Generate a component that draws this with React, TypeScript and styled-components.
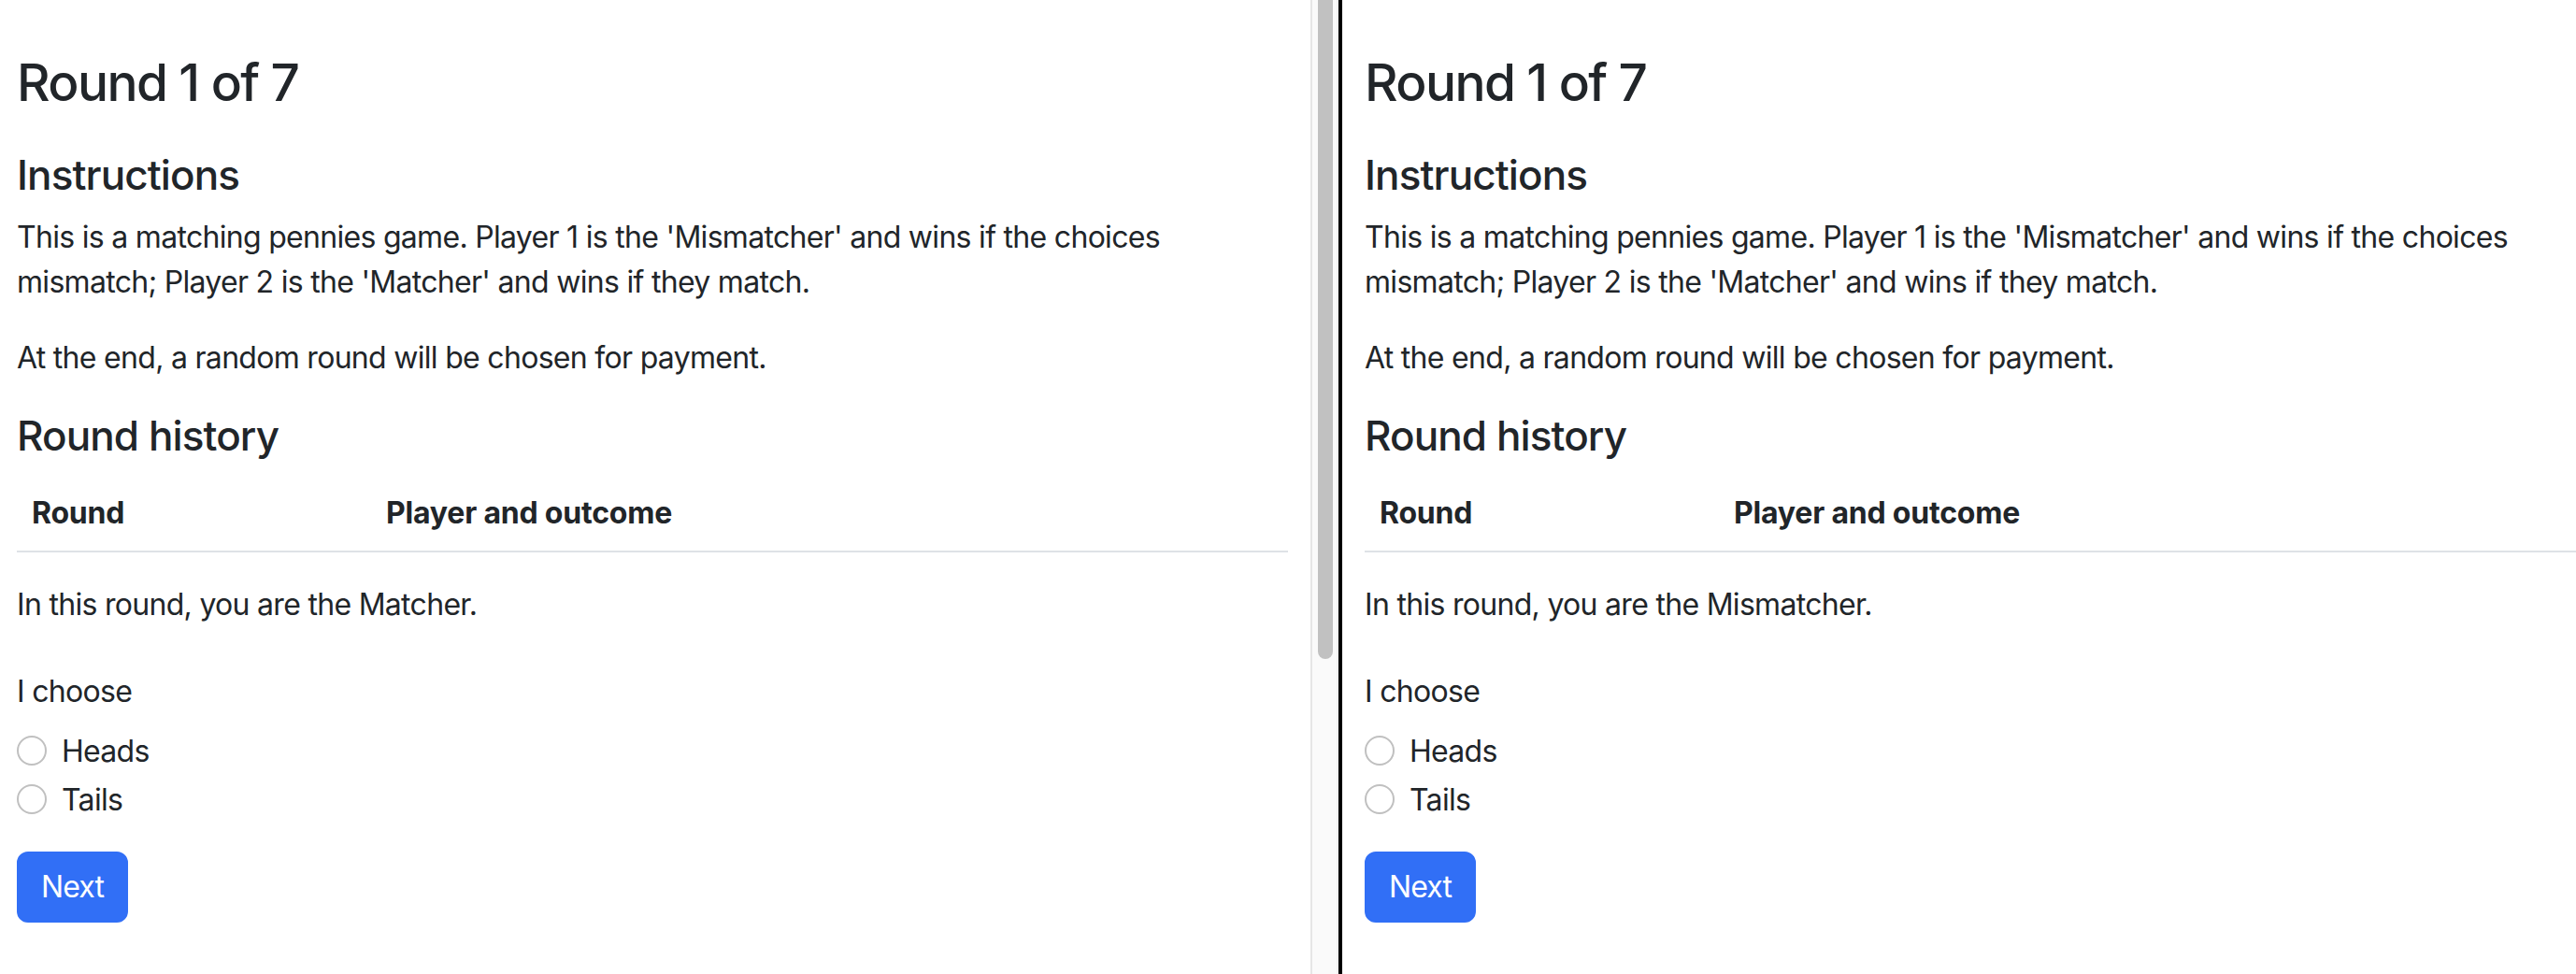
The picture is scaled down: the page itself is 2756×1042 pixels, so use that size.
import React from "react";
import styled, { createGlobalStyle } from "styled-components";

const GlobalStyle = createGlobalStyle`
  html, body {
    margin: 0;
    padding: 0;
    background: #ffffff;
  }
  body {
    font-family: Inter, "Noto Sans", "Liberation Sans", sans-serif;
    color: #212529;
    font-size: 32px;
    line-height: 48px;
  }
  * { box-sizing: border-box; }
`;

const Layout = styled.div`
  display: flex;
  width: 2756px;
  height: 1042px;
  overflow: hidden;
  background: #ffffff;
`;

const Pane = styled.section<{ $side: "left" | "right" }>`
  flex: ${(p) => (p.$side === "left" ? "0 0 1402px" : "1 1 auto")};
  min-width: 0;
  height: 100%;
  overflow: hidden;
  padding: ${(p) => (p.$side === "left" ? "55px 24px 0 18px" : "55px 0 0 24px")};
`;

const Content = styled.div`
  width: 1360px;
`;

const ScrollTrack = styled.div`
  flex: 0 0 30px;
  height: 100%;
  background: #fafafa;
  border-left: 2px solid #e6e6e6;
  border-right: 2px solid #efefef;
  padding-left: 6px;
`;

const ScrollThumb = styled.div`
  width: 16px;
  height: 705px;
  background: #c1c1c1;
  border-radius: 0 0 8px 8px;
`;

const Divider = styled.div`
  flex: 0 0 4px;
  height: 100%;
  background: #000000;
`;

const Title = styled.h2`
  margin: 0 0 40px;
  font-size: 55px;
  line-height: 66px;
  font-weight: 500;
  letter-spacing: -1.6px;
`;

const SectionTitle = styled.h4`
  margin: 0 0 16px;
  font-size: 44px;
  line-height: 53px;
  font-weight: 500;
  letter-spacing: -0.9px;
`;

const Paragraph = styled.p`
  margin: 0 0 33px;
  font-size: 32px;
  line-height: 48px;
  letter-spacing: -0.7px;
`;

const HistoryTable = styled.table`
  width: 100%;
  border-collapse: collapse;
  margin-bottom: 32px;
`;

const HeadCell = styled.th<{ $width?: number }>`
  text-align: left;
  font-weight: 700;
  font-size: 32px;
  line-height: 48px;
  letter-spacing: -0.2px;
  padding: 16px;
  border-bottom: 2px solid #dee2e6;
  width: ${(p) => (p.$width ? `${p.$width}px` : "auto")};
`;

const Fieldset = styled.div`
  margin: 45px 0 32px;
`;

const FieldLabel = styled.div`
  margin-bottom: 16px;
  font-size: 32px;
  line-height: 48px;
  letter-spacing: -0.7px;
`;

const RadioRow = styled.label`
  display: flex;
  align-items: flex-start;
  gap: 16px;
  min-height: 48px;
  margin-bottom: 4px;
  font-size: 32px;
  line-height: 48px;
  letter-spacing: -0.7px;
  cursor: pointer;
`;

const RadioInput = styled.input`
  appearance: none;
  -webkit-appearance: none;
  flex: 0 0 32px;
  width: 32px;
  height: 32px;
  margin: 7px 0 0;
  border: 2px solid #c0c0c0;
  border-radius: 50%;
  background: #ffffff;
`;

const PrimaryButton = styled.button`
  display: inline-block;
  font-family: inherit;
  font-size: 32px;
  line-height: 48px;
  font-weight: 400;
  letter-spacing: -0.9px;
  color: #ffffff;
  background: #316ff6;
  border: 2px solid #316ff6;
  border-radius: 12px;
  padding: 12px 24px;
  margin-top: -1px;
`;

function GameView({ role, name }: { role: string; name: string }) {
  return (
    <Content>
      <Title>Round 1 of 7</Title>
      <SectionTitle>Instructions</SectionTitle>
      <Paragraph>
        This is a matching pennies game. Player 1 is the 'Mismatcher' and wins if the choices
        mismatch; Player 2 is the 'Matcher' and wins if they match.
      </Paragraph>
      <Paragraph>At the end, a random round will be chosen for payment.</Paragraph>
      <SectionTitle>Round history</SectionTitle>
      <HistoryTable>
        <thead>
          <tr>
            <HeadCell $width={379}>Round</HeadCell>
            <HeadCell>Player and outcome</HeadCell>
          </tr>
        </thead>
        <tbody />
      </HistoryTable>
      <Paragraph>In this round, you are the {role}.</Paragraph>
      <Fieldset>
        <FieldLabel>I choose</FieldLabel>
        <RadioRow>
          <RadioInput type="radio" name={name} value="Heads" />
          Heads
        </RadioRow>
        <RadioRow>
          <RadioInput type="radio" name={name} value="Tails" />
          Tails
        </RadioRow>
      </Fieldset>
      <PrimaryButton type="button">Next</PrimaryButton>
    </Content>
  );
}

export default function App() {
  return (
    <>
      <GlobalStyle />
      <Layout>
        <Pane $side="left">
          <GameView role="Matcher" name="choice-left" />
        </Pane>
        <ScrollTrack>
          <ScrollThumb />
        </ScrollTrack>
        <Divider />
        <Pane $side="right">
          <GameView role="Mismatcher" name="choice-right" />
        </Pane>
      </Layout>
    </>
  );
}
